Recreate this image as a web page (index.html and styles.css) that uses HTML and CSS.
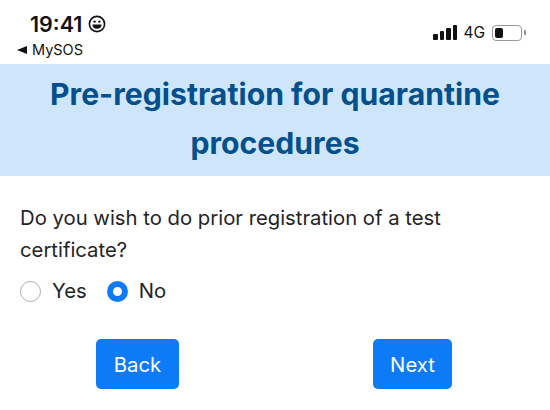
FILE: index.html
```html
<!DOCTYPE html>
<html lang="en">
<head>
    <meta charset="UTF-8">
    <meta name="viewport" content="width=device-width, initial-scale=1.0">
    <title>MySOS</title>
    <link rel="stylesheet" href="styles.css">
</head>
<body>
    <div class="status-bar">
        <div class="status-left">
            <div class="clock">
                <span>19:41</span>
                <svg class="smiley" width="18" height="18" viewBox="0 0 18 18">
                    <circle cx="9" cy="9" r="7.6" fill="none" stroke="#111" stroke-width="1.6"/>
                    <circle cx="6.6" cy="6.6" r="1.2" fill="#111"/>
                    <circle cx="11.4" cy="6.6" r="1.2" fill="#111"/>
                    <path d="M4.4 9.4h9.2c0 2.8-2.1 4.4-4.6 4.4s-4.6-1.6-4.6-4.4z" fill="#111"/>
                </svg>
            </div>
            <div class="back-app"><span class="back-arrow"></span>MySOS</div>
        </div>
        <div class="status-right">
            <div class="signal">
                <span class="bar bar1"></span>
                <span class="bar bar2"></span>
                <span class="bar bar3"></span>
                <span class="bar bar4"></span>
            </div>
            <span class="network">4G</span>
            <div class="battery"><span class="battery-level"></span></div>
            <span class="battery-cap"></span>
        </div>
    </div>

    <header class="banner">
        <h1>Pre-registration for quarantine procedures</h1>
    </header>

    <main class="content">
        <p class="question">Do you wish to do prior registration of a test certificate?</p>
        <div class="options">
            <label class="option"><span class="radio"></span>Yes</label>
            <label class="option"><span class="radio checked"></span>No</label>
        </div>
        <div class="actions">
            <button class="btn btn-back">Back</button>
            <button class="btn btn-next">Next</button>
        </div>
    </main>
</body>
</html>
```
FILE: styles.css
```css
body {
    margin: 0;
    width: 550px;
    height: 410px;
    overflow: hidden;
    background-color: #fff;
    color: #1f2327;
    font-family: Inter, "Liberation Sans", sans-serif;
}
.status-bar {
    height: 64px;
    display: flex;
    justify-content: space-between;
    box-sizing: border-box;
    padding: 11px 24px 0 17px;
    color: #111;
}
.clock {
    display: flex;
    align-items: center;
    gap: 6px;
    margin-left: 13px;
    font-size: 21.5px;
    font-weight: 600;
    line-height: 26px;
}
.back-app {
    display: flex;
    align-items: center;
    gap: 5px;
    font-size: 14.5px;
    line-height: 16px;
    margin-top: 5px;
}
.back-arrow {
    width: 0;
    height: 0;
    border-top: 4.5px solid transparent;
    border-bottom: 4.5px solid transparent;
    border-right: 10px solid #111;
}
.status-right {
    display: flex;
    align-items: center;
    height: 43px;
}
.signal {
    display: flex;
    align-items: flex-end;
    gap: 2px;
    margin-right: 6px;
}
.bar {
    width: 4.5px;
    border-radius: 1px;
    background-color: #111;
}
.bar1 { height: 6px; }
.bar2 { height: 9px; }
.bar3 { height: 12px; }
.bar4 { height: 15px; }
.network {
    font-size: 15.5px;
    margin-right: 7px;
}
.battery {
    width: 30px;
    height: 16px;
    box-sizing: border-box;
    padding: 2px;
    border: 1px solid #999;
    border-radius: 4px;
}
.battery-level {
    display: block;
    width: 8px;
    height: 100%;
    border-radius: 2px;
    background-color: #111;
}
.battery-cap {
    width: 2px;
    height: 5px;
    margin-left: 2px;
    background-color: #999;
}
.banner {
    height: 112px;
    box-sizing: border-box;
    padding: 6px 20px 0;
    background-color: #cfe6fa;
    text-align: center;
}
.banner h1 {
    margin: 0;
    color: #03508c;
    font-size: 30.2px;
    font-weight: 700;
    line-height: 49px;
}
.content {
    padding: 26px 20px 0;
}
.question {
    margin: 0;
    font-size: 20.3px;
    line-height: 32px;
}
.options {
    display: flex;
    gap: 20px;
    margin-top: 10px;
}
.option {
    display: flex;
    align-items: center;
    gap: 11px;
    font-size: 20.3px;
    line-height: 30px;
}
.radio {
    width: 21px;
    height: 21px;
    box-sizing: border-box;
    border: 1px solid #adadad;
    border-radius: 50%;
    background-color: #fff;
}
.radio.checked {
    border: 6px solid #0d7bf6;
}
.actions {
    display: flex;
    justify-content: space-between;
    margin-top: 33px;
    padding: 0 78px 0 76px;
}
.btn {
    height: 50px;
    padding: 0;
    border: none;
    border-radius: 5px;
    background-color: #0d7bf6;
    color: #fff;
    font-family: inherit;
    font-size: 20.3px;
}
.btn-back { width: 83px; }
.btn-next { width: 79px; }
```
